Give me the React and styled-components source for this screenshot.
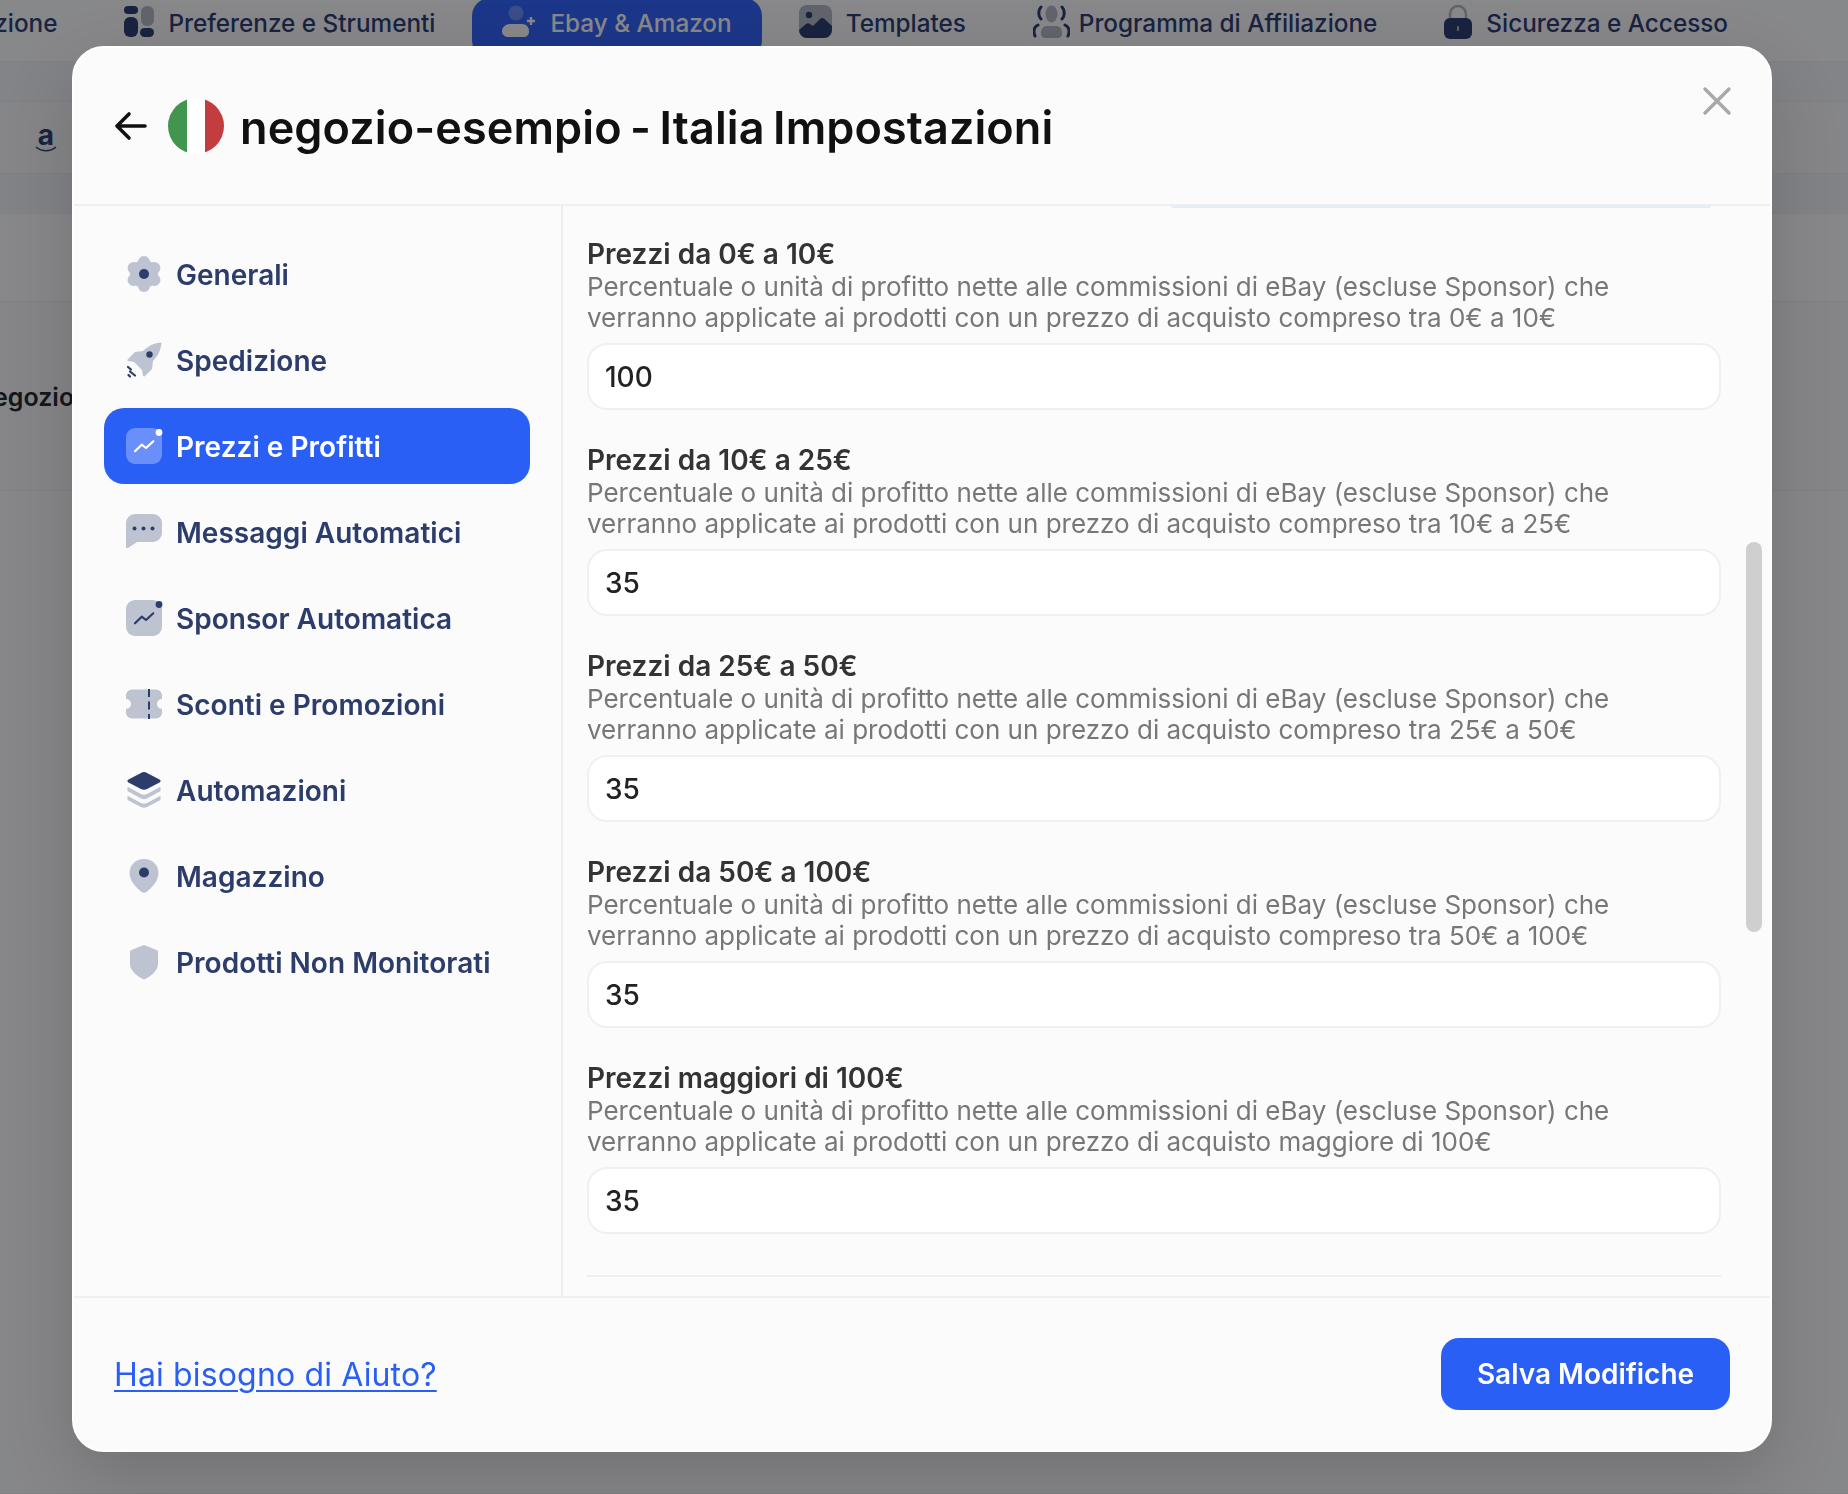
import styled, { createGlobalStyle } from "styled-components";

const Global = createGlobalStyle`
  * { box-sizing: border-box; }
  html, body { margin: 0; height: 100%; }
  body { font-family: "Inter", "Liberation Sans", sans-serif; background: #fff; overflow: hidden; }
`;

/* page behind the dialog */
const Page = styled.div`
  height: 1494px;
  background: #ffffff;
  color: #2f4274;
`;

const Nav = styled.nav`
  height: 62px;
  display: flex;
  justify-content: flex-end;
  align-items: flex-start;
  gap: 7px;
  padding-right: 90px;
  overflow: hidden;
  border-bottom: 1px solid #f2f3f5;
`;

const NavItem = styled.div`
  flex: none;
  height: 60px;
  margin-top: -2px;
  display: flex;
  align-items: flex-start;
  gap: 14px;
  padding: 7px 30px 0;
  border-radius: 18px;
  font-size: 24.3px;
  font-weight: 500;
  line-height: 36px;
  white-space: nowrap;
  background: ${(p) => (p.$active ? "#3466fe" : "transparent")};
  color: ${(p) => (p.$active ? "#ffffff" : "#2f4274")};
`;

const NavIcon = styled.svg`
  flex: none;
  margin-right: ${(p) => p.$pull || 0}px;
`;

const Band = styled.div`
  height: ${(p) => p.$h}px;
  display: flex;
  align-items: center;
  background: ${(p) => p.$bg || "#ffffff"};
  border-bottom: 1px solid #f0f1f4;
`;

const AmazonMark = styled.div`
  margin-left: 35px;
  width: 22px;
  display: flex;
  flex-direction: column;
  align-items: center;
  font-size: 28px;
  font-weight: 700;
  line-height: 22px;
`;

const ShopName = styled.span`
  margin: 2px 0 0 -7px;
  font-size: 25px;
  font-weight: 600;
  color: #262a30;
  white-space: nowrap;
`;

/* dialog */
const Backdrop = styled.div`
  position: fixed;
  inset: 0;
  display: flex;
  padding: 46px 76px 42px 72px;
  background: rgba(0, 3, 7, 0.47);
  backdrop-filter: blur(0.5px);
`;

const Modal = styled.div`
  flex: 1;
  min-width: 0;
  display: flex;
  flex-direction: column;
  background: #fbfbfb;
  border: 2px solid #ffffff;
  border-radius: 32px;
  box-shadow: 0 24px 70px rgba(0, 0, 0, 0.16);
  overflow: hidden;
`;

const Header = styled.header`
  flex: none;
  height: 158px;
  display: flex;
  align-items: center;
  padding: 0 40px;
  border-bottom: 2px solid #efefef;
`;

const Back = styled.button`
  width: 34px;
  height: 34px;
  padding: 0;
  margin-right: 20px;
  border: 0;
  background: none;
  color: #111;
  display: flex;
`;

const Flag = styled.svg`
  width: 56px;
  height: 56px;
  flex: none;
  margin-right: 16px;
`;

const Title = styled.h1`
  margin: 2px 0 0;
  font-size: 45px;
  font-weight: 600;
  letter-spacing: 0.1px;
  word-spacing: -3px;
  color: #111;
  white-space: nowrap;
`;

const Close = styled.button`
  margin: -51px -2px 0 auto;
  width: 30px;
  height: 30px;
  padding: 0;
  border: 0;
  background: none;
  color: #a8a8a8;
  display: flex;
`;

const Body = styled.div`
  flex: 1;
  min-height: 0;
  display: flex;
`;

const Sidebar = styled.aside`
  flex: none;
  width: 489px;
  padding: 30px 31px 0 30px;
  display: flex;
  flex-direction: column;
  gap: 10px;
  border-right: 2px solid #efefef;
`;

const MenuItem = styled.a`
  --light: ${(p) => (p.$active ? "#6b8ffa" : "#bec3d2")};
  --dark: ${(p) => (p.$active ? "#ffffff" : "#2c3c6b")};
  height: 76px;
  display: flex;
  align-items: center;
  gap: 14px;
  padding-left: 22px;
  border-radius: 20px;
  font-size: 28px;
  font-weight: 600;
  letter-spacing: 0.02px;
  color: ${(p) => (p.$active ? "#ffffff" : "#2c3c6b")};
  background: ${(p) => (p.$active ? "#2a5ff6" : "transparent")};
  white-space: nowrap;
`;

const MenuLabel = styled.span`
  margin-top: 2px;
`;

const Content = styled.main`
  position: relative;
  flex: 1;
  min-width: 0;
  padding: 0 49px 0 24px;
  overflow: hidden;
`;

const ClippedEdge = styled.div`
  height: 2px;
  margin: 0 10px 30px 584px;
  border-radius: 0 0 6px 6px;
  background: #e3ebfb;
`;

const Field = styled.div`
  margin-bottom: 34px;
`;

const Label = styled.div`
  font-size: 28px;
  line-height: 33px;
  font-weight: 600;
  color: #333;
`;

const Hint = styled.div`
  font-size: 26px;
  line-height: 31px;
  color: #777;
`;

const Input = styled.input`
  display: block;
  width: 100%;
  height: 67px;
  margin-top: 10px;
  padding: 0 16px;
  border: 2px solid #f0f0f0;
  border-radius: 20px;
  background: #fff;
  font: 500 28px "Inter", sans-serif;
  color: #222;
  outline: none;
`;

const Rule = styled.hr`
  height: 2px;
  margin: 41px 0 0;
  border: 0;
  background: #efefef;
`;

const ScrollThumb = styled.div`
  position: absolute;
  top: 336px;
  right: 8px;
  width: 16px;
  height: 390px;
  border-radius: 8px;
  background: #cfcfcf;
`;

const Footer = styled.footer`
  flex: none;
  height: 154px;
  display: flex;
  align-items: center;
  justify-content: space-between;
  padding: 0 40px;
  border-top: 2px solid #efefef;
`;

const HelpLink = styled.a`
  font-size: 32px;
  letter-spacing: 0.15px;
  color: #2a5ff6;
  text-decoration: underline;
  text-underline-offset: 4px;
  text-decoration-thickness: 2px;
`;

const SaveButton = styled.button`
  width: 289px;
  height: 72px;
  border: 0;
  border-radius: 18px;
  background: #2a5ff6;
  color: #fff;
  font: 600 28px "Inter", sans-serif;
`;

/* icons */
const Duo = styled.svg.attrs({ width: 36, height: 36, viewBox: "0 0 36 36" })`
  flex: none;
  overflow: visible;
  .l { fill: var(--light); }
  .d { fill: var(--dark); }
  .s {
    fill: none;
    stroke: var(--dark);
    stroke-linecap: round;
    stroke-linejoin: round;
  }
`;

const GearIcon = () => (
  <Duo>
    <g className="l">
      <circle cx="18" cy="18" r="14" />
      {[0, 60, 120, 180, 240, 300].map((a) => (
        <circle key={a} cx="18" cy="18" r="6" transform={`rotate(${a} 18 18) translate(0 -12)`} />
      ))}
    </g>
    <circle cx="18" cy="18" r="5" className="d" />
  </Duo>
);
const RocketIcon = () => (
  <Duo>
    <path className="l" d="M35.5.5C28 1 22 4 17 9l-8 1-7 7c-1 1-.6 1.800.5 2l5.500 1 8 8 1 5.500c.2 1.100 1 1.500 2 .5l7-7 1-8c5-5 8-11 8.500-18.500z" />
    <circle cx="23.500" cy="12.500" r="3.200" className="d" />
    <path className="s" strokeWidth="2.200" d="M2 25l3 2.500M4 29.500l5 4M2.500 33l1.500 1.500" />
  </Duo>
);
const ChartIcon = () => (
  <Duo>
    <rect width="36" height="36" rx="9" className="l" />
    <circle cx="33" cy="4.500" r="3.400" className="d" />
    <path className="s" strokeWidth="2.200" d="M9 23.300l6.700-6.600 4.300 3.300 7.300-6.700" />
  </Duo>
);
const ChatIcon = () => (
  <Duo>
    <path className="l" d="M9 0h18a9 9 0 0 1 9 9v10a9 9 0 0 1-9 9H11l-9 6c-1 .5-2 0-2-1V9a9 9 0 0 1 9-9z" />
    <g className="d">
      <circle cx="8.500" cy="14.500" r="2" />
      <circle cx="17.500" cy="14.500" r="2" />
      <circle cx="26.500" cy="14.500" r="2" />
    </g>
  </Duo>
);
const TicketIcon = () => (
  <Duo>
    <path className="l" d="M6 3.500h24a6 6 0 0 1 6 6V13a5 5 0 0 0 0 10v3.500a6 6 0 0 1-6 6H6a6 6 0 0 1-6-6V23a5 5 0 0 0 0-10V9.500a6 6 0 0 1 6-6z" />
    <path fill="none" stroke="var(--dark)" strokeWidth="2" strokeDasharray="8 4.500" d="M23 3v30" />
  </Duo>
);
const LayersIcon = () => (
  <Duo>
    <path className="l" d="M2 15l13 7c2 1 4 1 6 0l13-7c.5 0 .500.500.500 1v3L21 26.500c-2 1-4 1-6 0L1.500 19v-3c0-.5 0-1 .5-1z" />
    <path className="l" d="M2 24l13 7c2 1 4 1 6 0l13-7c.5 0 .500.500.500 1v3L21 35c-2 1-4 1-6 0L1.500 28v-3c0-.5 0-1 .5-1z" />
    <path className="d" d="M18 0c1 0 2 .3 3 1l12.500 6.500c1.500.8 1.500 2.200 0 3L21 17c-2 1-4 1-6 0L2.500 10.500c-1.500-.8-1.500-2.200 0-3L15 1c1-.7 2-1 3-1z" />
  </Duo>
);
const PinIcon = () => (
  <Duo>
    <path className="l" d="M18 1c8 0 14.500 6 14.500 14 0 8-7 15-12 19-1.500 1-3.500 1-5 0C10.500 30 3.500 23 3.500 15 3.500 7 10 1 18 1z" />
    <circle cx="18" cy="14.500" r="5" className="d" />
  </Duo>
);
const ShieldIcon = () => (
  <Duo>
    <path className="l" d="M16.500 1.500c1-.5 2-.5 3 0L30.500 6c1 .4 1.500 1.200 1.500 2v12c0 7-8 13-14 15.500C12 33 4 27 4 20V8c0-.8.500-1.600 1.500-2z" />
  </Duo>
);

const dark = "#2f4274";
const grey = "#b8bcc8";

const PrefsIcon = () => (
  <NavIcon width="30" height="32" viewBox="0 0 30 32">
    <rect x="0" y="1" width="14" height="8" rx="4" fill={dark} />
    <rect x="0" y="12" width="14" height="20" rx="6" fill={dark} />
    <rect x="17" y="1" width="13" height="20" rx="6" fill={grey} />
    <rect x="16" y="23" width="14" height="9" rx="4.500" fill={dark} />
  </NavIcon>
);
const UserPlusIcon = () => (
  <NavIcon width="34" height="32" viewBox="0 0 34 32">
    <circle cx="14" cy="8" r="7.500" fill="#6f92fc" />
    <path d="M8 19h12c4 0 7 3 7 7 0 4-2 6-6 6H7c-4 0-7-2-7-6 0-4 4-7 8-7z" fill="#fff" />
    <path d="M29 12v8M25 16h8" stroke="#fff" strokeWidth="2.400" />
  </NavIcon>
);
const ImageIcon = () => (
  <NavIcon width="33" height="33" viewBox="0 0 33 33">
    <rect width="33" height="33" rx="8" fill={grey} />
    <circle cx="10" cy="10" r="3.200" fill={dark} />
    <path d="M0 25l7-6c1.500-1 3-1 4 0l3 2 7-7c1.500-1.200 3-1.200 4.500 0L33 21v4a8 8 0 0 1-8 8H8a8 8 0 0 1-8-8z" fill={dark} />
  </NavIcon>
);
const PeopleIcon = () => (
  <NavIcon $pull={-5} width="37" height="33" viewBox="0 0 37 33">
    <ellipse cx="18.500" cy="9" rx="6" ry="8.500" fill={grey} />
    <path d="M14 21h9c4 0 6 3 6 7s-2 5-5 5H13c-3 0-5-1-5-5s2-7 6-7z" fill={grey} />
    <path d="M8 2C5 5 5 11 8 14M29 2c3 3 3 9 0 12M5 20c-4 2-5 6-3 11M32 20c4 2 5 6 3 11" fill="none" stroke={dark} strokeWidth="3" strokeLinecap="round" />
  </NavIcon>
);
const LockIcon = () => (
  <NavIcon width="28" height="34" viewBox="0 0 28 34">
    <path d="M6 15V9a8 8 0 0 1 16 0v6" fill="none" stroke={grey} strokeWidth="2.500" />
    <rect y="13" width="28" height="21" rx="6" fill={dark} />
    <rect x="13" y="21" width="2" height="5" rx="1" fill={grey} />
  </NavIcon>
);

const menu = [
  ["Generali", GearIcon],
  ["Spedizione", RocketIcon],
  ["Prezzi e Profitti", ChartIcon, true],
  ["Messaggi Automatici", ChatIcon],
  ["Sponsor Automatica", ChartIcon],
  ["Sconti e Promozioni", TicketIcon],
  ["Automazioni", LayersIcon],
  ["Magazzino", PinIcon],
  ["Prodotti Non Monitorati", ShieldIcon],
];

const BASE = "Percentuale o unità di profitto nette alle commissioni di eBay (escluse Sponsor) che verranno applicate ai prodotti con un prezzo di acquisto";

const fields = [
  ["Prezzi da 0€ a 10€", "compreso tra 0€ a 10€", "100"],
  ["Prezzi da 10€ a 25€", "compreso tra 10€ a 25€", "35"],
  ["Prezzi da 25€ a 50€", "compreso tra 25€ a 50€", "35"],
  ["Prezzi da 50€ a 100€", "compreso tra 50€ a 100€", "35"],
  ["Prezzi maggiori di 100€", "maggiore di 100€", "35"],
];

export default function App() {
  return (
    <>
      <Global />
      <Page>
        <Nav>
          <NavItem>Spedizione</NavItem>
          <NavItem><PrefsIcon />Preferenze e Strumenti</NavItem>
          <NavItem $active><UserPlusIcon />Ebay &amp; Amazon</NavItem>
          <NavItem><ImageIcon />Templates</NavItem>
          <NavItem><PeopleIcon />Programma di Affiliazione</NavItem>
          <NavItem><LockIcon />Sicurezza e Accesso</NavItem>
        </Nav>
        <Band $h={40} $bg="#f6f7f9" />
        <Band $h={72} $bg="#fcfcfd">
          <AmazonMark>
            a
            <svg width="22" height="6" viewBox="0 0 22 6">
              <path d="M1 1c6 5 14 5 20 0" fill="none" stroke="#2f4274" strokeWidth="1.500" />
            </svg>
          </AmazonMark>
        </Band>
        <Band $h={40} $bg="#f4f5f8" />
        <Band $h={88} />
        <Band $h={189} $bg="#fbfbfc">
          <ShopName>egozio-esempio</ShopName>
        </Band>
        <Band $h={1003} $bg="#fdfdfd" />
      </Page>
      <Backdrop>
        <Modal>
          <Header>
            <Back aria-label="Indietro">
              <svg width="34" height="34" viewBox="0 0 34 34" fill="none" stroke="currentColor" strokeWidth="3.600" strokeLinecap="round" strokeLinejoin="round">
                <path d="M31 17H3M15 5L3 17l12 12" />
              </svg>
            </Back>
            <Flag viewBox="0 0 56 56">
              <clipPath id="flag-round"><circle cx="28" cy="28" r="28" /></clipPath>
              <g clipPath="url(#flag-round)">
                <rect width="19" height="56" fill="#42954f" />
                <rect x="19" width="18" height="56" fill="#fff" />
                <rect x="37" width="19" height="56" fill="#c33d3f" />
              </g>
            </Flag>
            <Title>negozio-esempio - Italia Impostazioni</Title>
            <Close aria-label="Chiudi">
              <svg width="30" height="30" viewBox="0 0 30 30" fill="none" stroke="currentColor" strokeWidth="3.400" strokeLinecap="round">
                <path d="M3 3l24 24M27 3L3 27" />
              </svg>
            </Close>
          </Header>
          <Body>
            <Sidebar>
              {menu.map(([label, Icon, active]) => (
                <MenuItem key={label} $active={active}>
                  <Icon />
                  <MenuLabel>{label}</MenuLabel>
                </MenuItem>
              ))}
            </Sidebar>
            <Content>
              <ClippedEdge />
              {fields.map(([label, tail, value]) => (
                <Field key={label}>
                  <Label>{label}</Label>
                  <Hint>{BASE} {tail}</Hint>
                  <Input readOnly value={value} />
                </Field>
              ))}
              <Rule />
              <ScrollThumb />
            </Content>
          </Body>
          <Footer>
            <HelpLink href="#">Hai bisogno di Aiuto?</HelpLink>
            <SaveButton>Salva Modifiche</SaveButton>
          </Footer>
        </Modal>
      </Backdrop>
    </>
  );
}
